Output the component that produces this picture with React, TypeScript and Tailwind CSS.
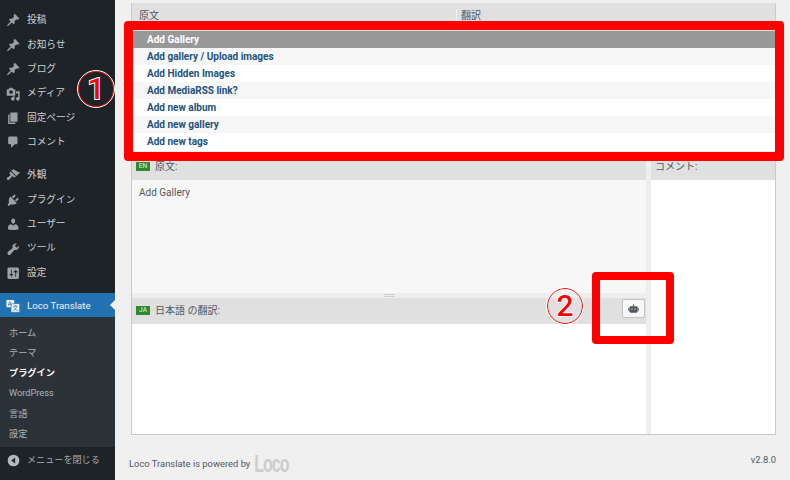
const icons: Record<string, string> = {
  post: "M10.44 3.02l1.82-1.82 6.36 6.35-1.83 1.82c-1.05-.68-2.48-.57-3.41.36l-.75.75c-.92.93-1.04 2.35-.35 3.41l-1.83 1.82-2.41-2.41-2.8 2.79c-.42.42-3.38 2.71-3.8 2.29s1.86-3.39 2.28-3.81l2.79-2.79L4.1 9.36l1.83-1.82c1.05.69 2.48.57 3.4-.36l.75-.75c.93-.92 1.05-2.35.36-3.41z",
  media: "M13 11V4c0-.55-.45-1-1-1h-1.67L9 1H5L3.67 3H2c-.55 0-1 .45-1 1v7c0 .55.45 1 1 1h10c.55 0 1-.45 1-1zM7 4.500c1.380 0 2.500 1.120 2.500 2.500S8.380 9.500 7 9.500 4.500 8.380 4.500 7 5.620 4.500 7 4.500zM14 6h5v10.500c0 1.380-1.120 2.500-2.500 2.500S14 17.880 14 16.500s1.120-2.500 2.500-2.500c.17 0 .34.02.5.05V9h-3V6zm-4 8.050V13h2v3.500c0 1.380-1.120 2.500-2.500 2.500S7 17.880 7 16.500 8.120 14 9.500 14c.17 0 .34.02.5.05z",
  page: "M6 15V2h10v13H6zm-1 1h8v2H3V5h2v11z",
  comment: "M5 2h9c1.100 0 2 .9 2 2v7c0 1.100-.9 2-2 2h-2l-5 5v-5H5c-1.100 0-2-.9-2-2V4c0-1.100.9-2 2-2z",
  appearance: "M14.480 11.060L7.410 3.990l1.500-1.500c.5-.56 2.300-.47 3.510.32 1.210.8 1.430 1.280 2.910 2.100 1.180.64 2.450 1.260 4.450.85zm-.71.71L6.700 4.700 4.930 6.470c-.39.39-.39 1.020 0 1.410l1.060 1.060c.39.39.39 1.030 0 1.420-.6.6-1.430 1.110-2.210 1.690-.35.26-.7.53-1.010.84C1.430 13.230.4 14.950 1.580 16.120c1.170 1.180 2.890.15 4.230-1.190.31-.31.58-.66.85-1.010.57-.78 1.080-1.610 1.690-2.210.39-.39 1.020-.39 1.410 0l1.060 1.060c.39.39 1.020.39 1.410 0z",
  plugins: "M13.110 4.360L9.870 7.600 8 5.730l3.240-3.240c.35-.34 1.050-.2 1.560.32.52.51.66 1.210.31 1.550zm-8 1.770l.91-1.120 9.010 9.010-1.190.84c-.71.71-2.630 1.160-3.820 1.160H6.140L4.900 17.260c-.59.59-1.540.59-2.120 0-.59-.58-.59-1.530 0-2.120l1.240-1.240v-3.880c0-1.130.4-3.190 1.090-3.890zm7.260 3.970l3.240-3.240c.34-.35 1.040-.21 1.550.31.52.51.66 1.210.31 1.550l-3.240 3.250z",
  users: "M10 9.250c-2.270 0-2.730-3.440-2.730-3.440C7 4.020 7.820 2 9.970 2c2.160 0 2.980 2.020 2.710 3.810 0 0-.41 3.440-2.680 3.440zm0 2.570L12.720 10c2.390 0 4.520 2.330 4.520 4.530v2.490s-3.650 1.130-7.240 1.130c-3.650 0-7.240-1.130-7.240-1.130v-2.490c0-2.250 1.940-4.480 4.470-4.480z",
  tools: "M16.680 9.770c-1.340 1.340-3.300 1.670-4.950.99l-5.410 6.520c-.99.99-2.590.99-3.580 0s-.99-2.590 0-3.570l6.520-5.420c-.68-1.650-.35-3.610.99-4.950 1.280-1.280 3.120-1.620 4.720-1.060l-2.890 2.890 2.820 2.820 2.860-2.870c.53 1.580.18 3.390-1.080 4.650z",
  settings: "M18 16V4c0-1.100-.9-2-2-2H4c-1.100 0-2 .9-2 2v12c0 1.100.9 2 2 2h12c1.100 0 2-.9 2-2zM8 11h1c.55 0 1 .45 1 1s-.45 1-1 1H8v1.500c0 .28-.22.5-.5.5s-.5-.22-.5-.5V13H6c-.55 0-1-.45-1-1s.45-1 1-1h1V5.500c0-.28.22-.5.5-.5s.5.22.5.5V11zm5-2h-1c-.55 0-1-.45-1-1s.45-1 1-1h1V5.500c0-.28.22-.5.5-.5s.5.22.5.5V7h1c.55 0 1 .45 1 1s-.45 1-1 1h-1v5.500c0 .28-.22.5-.5.5s-.5-.22-.5-.5V9z",
};

const topMenu = [
  { label: "投稿", icon: "post" },
  { label: "お知らせ", icon: "post" },
  { label: "ブログ", icon: "post" },
  { label: "メディア", icon: "media" },
  { label: "固定ページ", icon: "page" },
  { label: "コメント", icon: "comment" },
];
const midMenu = [
  { label: "外観", icon: "appearance" },
  { label: "プラグイン", icon: "plugins" },
  { label: "ユーザー", icon: "users" },
  { label: "ツール", icon: "tools" },
  { label: "設定", icon: "settings" },
];
const subMenu = ["ホーム", "テーマ", "プラグイン", "WordPress", "言語", "設定"];
const strings = [
  "Add Gallery",
  "Add gallery / Upload images",
  "Add Hidden Images",
  "Add MediaRSS link?",
  "Add new album",
  "Add new gallery",
  "Add new tags",
];

function MenuItem({ label, icon }: { label: string; icon: string }) {
  return (
    <div className="h-[24.4px] flex items-center pl-[6px] text-[9.7px] text-[#cfd0d2]">
      <svg viewBox="0 0 20 20" className="w-[14.4px] h-[14.4px] shrink-0 fill-[#9ca0a4]">
        <path d={icons[icon]} />
      </svg>
      <span className="ml-[6.6px]">{label}</span>
    </div>
  );
}

function LangHeader({ code, label }: { code: string; label: string }) {
  return (
    <div className="h-[26px] shrink-0 bg-[#e0e0e0] flex items-center pl-[4px] text-[10px] text-[#50575e]">
      <span className="w-[14px] h-[9px] bg-[#2c8a2f] text-[#e4f1e4] text-[6.500px] leading-[9px] text-center">{code}</span>
      <span className="ml-[5px]">{label}</span>
    </div>
  );
}

export default function App() {
  return (
    <div
      className="relative w-[790px] h-[480px] overflow-hidden flex bg-[#f0f0f0]"
      style={{ fontFamily: 'Roboto, "Noto Sans CJK JP", sans-serif' }}
    >
      {/* Sidebar */}
      <aside className="w-[115px] shrink-0 bg-[#1d2327] flex flex-col pt-[8.400px]">
        {topMenu.map((m) => (
          <MenuItem key={m.label} {...m} />
        ))}
        <div className="h-[8.6px]" />
        {midMenu.map((m) => (
          <MenuItem key={m.label + m.icon} {...m} />
        ))}
        <div className="h-[8px]" />
        <div className="relative h-[24px] bg-[#2271b1] flex items-center pl-[6px] pt-[2px] text-[9.7px] text-[#eef3f8]">
          <svg viewBox="0 0 20 20" className="w-[14.4px] h-[14.4px] shrink-0">
            <rect x="0.500" y="1.500" width="11" height="10" rx="1" fill="#f2f5f8" />
            <rect x="7" y="6.500" width="12" height="12" rx="1" fill="#f2f5f8" stroke="#2271b1" strokeWidth=".8" />
            <path d="M2.800 9.500l2.400-6 2.400 6M3.800 7.500h2.800" stroke="#2271b1" strokeWidth="1" fill="none" />
            <path d="M9.500 10h7M13 8.500V10M10 16.500c2.800-1 4.300-3.200 4.600-6.500M11 11.500c1 2.400 3 4.200 6 5" stroke="#2271b1" strokeWidth=".9" fill="none" />
          </svg>
          <span className="ml-[6.6px]">Loco Translate</span>
          <div className="absolute right-0 top-[7px] w-0 h-0 border-y-[5px] border-y-transparent border-r-[5px] border-r-[#f0f0f0]" />
        </div>
        <div className="h-[130px] bg-[#2c3338] pt-[5.400px] flex flex-col">
          {subMenu.map((s) => (
            <div
              key={s}
              className={`h-[20.2px] flex items-center pl-[9px] text-[9.200px] ${s === "プラグイン" ? "font-bold text-white" : "text-[#aeb3b8]"}`}
            >
              {s}
            </div>
          ))}
        </div>
        <div className="flex-1 flex items-start pt-[7px] pl-[7px] text-[9.100px] text-[#a7aaad]">
          <svg viewBox="0 0 20 20" className="w-[13px] h-[13px] shrink-0">
            <circle cx="10" cy="10" r="9" fill="#b5b8bb" />
            <path d="M12.500 5.500v9L6.500 10z" fill="#1d2327" />
          </svg>
          <span className="ml-[7px]">メニューを閉じる</span>
        </div>
      </aside>

      {/* Main */}
      <main className="flex-1 flex flex-col pl-[14px] pr-[14px] pt-[3px]">
        <div className="ml-[2px] h-[432px] shrink-0 flex flex-col border-x border-b border-[#c9c9c9] bg-[#eeeeee]">
          <div className="h-[27.600px] shrink-0 bg-[#e0e0e0] flex text-[10px] text-[#50575e] pt-[6px]">
            <div className="w-[325px] pl-[7px] border-r border-[#f0f0f0] h-[14px] leading-[14px]">原文</div>
            <div className="pl-[4px] h-[14px] leading-[14px]">翻訳</div>
          </div>
          <div className="h-[120.400px] shrink-0 bg-white flex flex-col text-[10px] font-bold text-[#21527e]">
            {strings.map((s, i) => (
              <div
                key={s}
                className={`h-[17.100px] shrink-0 flex items-center pl-[15px] ${i === 0 ? "bg-[#999999] text-white" : i % 2 === 1 ? "bg-[#f6f6f6]" : "bg-white"}`}
              >
                {s}
              </div>
            ))}
          </div>
          <div className="h-[3px] shrink-0" />
          <div className="flex-1 flex min-h-0">
            <div className="w-[514px] shrink-0 flex flex-col">
              <LangHeader code="EN" label="原文:" />
              <div className="h-[113px] shrink-0 bg-[#f7f7f7] pl-[7px] pt-[5px] text-[10px] text-[#50575e]">Add Gallery</div>
              <div className="h-[5px] shrink-0 flex flex-col items-center justify-center gap-px">
                <div className="w-[11px] h-px bg-[#cfcfcf]" />
                <div className="w-[11px] h-px bg-[#cfcfcf]" />
              </div>
              <div className="relative">
                <LangHeader code="JA" label="日本語 の翻訳:" />
                <button className="absolute right-[1px] top-[1px] w-[23px] h-[19px] bg-[#f6f7f7] border border-[#c3c4c7] rounded-[2px] flex items-center justify-center">
                  <svg viewBox="0 0 12 12" className="w-[11px] h-[11px] fill-[#50575e]">
                    <rect x="1.500" y="3.500" width="9" height="7" rx="1.500" />
                    <rect x="5.300" y="1.500" width="1.400" height="2" />
                    <rect x="0.300" y="5.500" width="1" height="3" />
                    <rect x="10.700" y="5.500" width="1" height="3" />
                    <circle cx="4.300" cy="6.500" r=".8" fill="#c8c8c8" />
                    <circle cx="7.700" cy="6.500" r=".8" fill="#c8c8c8" />
                  </svg>
                </button>
              </div>
              <div className="flex-1 bg-white" />
            </div>
            <div className="w-[5px] shrink-0" />
            <div className="flex-1 flex flex-col">
              <div className="h-[26px] shrink-0 bg-[#e0e0e0] flex items-center pl-[4px] text-[10px] text-[#50575e]">コメント:</div>
              <div className="flex-1 bg-white" />
            </div>
          </div>
        </div>
        <div className="flex justify-between items-start text-[#50575e]">
          <div className="flex items-center pt-[19px] text-[9.400px]">
            <span>Loco Translate is powered by</span>
            <span
              className="ml-[4px] inline-block scale-y-150 text-[16px] leading-[20px] tracking-[-1px] font-bold text-[#cccccc]"
              style={{ fontFamily: '"Liberation Sans", sans-serif' }}
            >
              Loco
            </span>
          </div>
          <span className="pt-[18px] text-[9.400px]">v2.8.0</span>
        </div>
      </main>

      {/* Annotations */}
      <div className="absolute left-[124px] top-[21px] w-[660px] h-[140px] border-[9px] border-[#ff0000] rounded-[4px]" />
      <div className="absolute left-[592px] top-[272px] w-[82px] h-[72px] border-[8.500px] border-[#ff0000] rounded-[4px]" />
      <div className="absolute left-[78px] top-[71px] w-[36px] h-[36px] rounded-full border border-[#ff0000] outline outline-1 outline-white flex items-center justify-center pb-[2px] text-[30px] font-medium text-[#ff0000] [-webkit-text-stroke:2px_white] [paint-order:stroke]">
        1
      </div>
      <div className="absolute left-[547px] top-[288px] w-[36px] h-[36px] rounded-full border border-[#ff0000] outline outline-1 outline-white flex items-center justify-center pb-[2px] text-[30px] font-medium text-[#ff0000] [-webkit-text-stroke:2px_white] [paint-order:stroke]">
        2
      </div>
    </div>
  );
}
